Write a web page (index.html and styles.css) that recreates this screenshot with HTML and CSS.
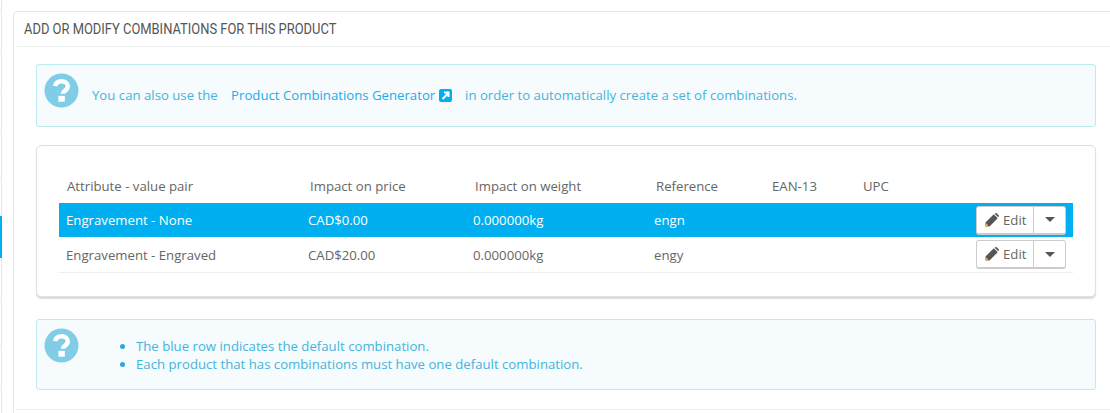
FILE: index.html
```html
<!DOCTYPE html>
<html>

<head>
    <meta charset="UTF-8">
    <title>Product Combinations</title>
    <link rel="stylesheet" href="styles.css">
</head>

<body>
    <div class="sidebar">
        <div class="sidebar-active"></div>
    </div>

    <div class="panel">
        <h3 class="panel-heading"><span class="panel-title">Add or modify combinations for this product</span></h3>

        <div class="alert alert-single">
            <svg class="alert-icon" viewBox="0 0 36 36">
                <circle cx="18" cy="18" r="17.5" fill="#81cde8" />
                <path d="M11.5 13.5c.6-3.2 3.2-5 6.6-5 3.700 0 6.400 2.200 6.400 5.200 0 4.300-5 4.400-5 7.600" fill="none" stroke="#fff" stroke-width="4.600" />
                <rect x="14.800" y="23.500" width="6.600" height="6" fill="#fff" />
            </svg>
            <p class="alert-text">
                You can also use the
                <a class="alert-link" href="#">Product Combinations Generator
                    <svg class="external-icon" viewBox="0 0 13 13">
                        <rect width="13" height="13" rx="2" fill="#00aff0" />
                        <path d="M3.500 10l5-5M5 3.500h4.500V8" fill="none" stroke="#fff" stroke-width="2" />
                    </svg>
                </a>
                in order to automatically create a set of combinations.
            </p>
        </div>

        <div class="table-card">
            <table class="combo-table">
                <colgroup>
                    <col class="col-attr">
                    <col class="col-price">
                    <col class="col-weight">
                    <col class="col-ref">
                    <col class="col-ean">
                    <col class="col-upc">
                    <col>
                </colgroup>
                <thead>
                    <tr>
                        <th>Attribute - value pair</th>
                        <th>Impact on price</th>
                        <th>Impact on weight</th>
                        <th>Reference</th>
                        <th>EAN-13</th>
                        <th>UPC</th>
                        <th></th>
                    </tr>
                </thead>
                <tbody>
                    <tr class="row-default">
                        <td>Engravement - None</td>
                        <td>CAD$0.00</td>
                        <td>0.000000kg</td>
                        <td>engn</td>
                        <td></td>
                        <td></td>
                        <td class="cell-actions">
                            <div class="btn-group">
                                <a class="btn btn-edit" href="#">
                                    <svg class="pencil-icon" viewBox="0 0 14 14">
                                        <path d="M.5 9.500L8.800 1.300l3.900 3.900L4.500 13.500H.5z" fill="#555" />
                                        <path d="M9.700.8l.9-.6c.4-.2.8-.2 1.100.1l2 2c.3.3.3.700.1 1.100l-.6.900z" fill="#555" />
                                        <path d="M.5 9.800l3.700 3.700H.5z" fill="#e2b15c" />
                                    </svg>
                                    Edit
                                </a>
                                <a class="btn btn-caret" href="#"><span class="caret"></span></a>
                            </div>
                        </td>
                    </tr>
                    <tr class="row-plain">
                        <td>Engravement - Engraved</td>
                        <td>CAD$20.00</td>
                        <td>0.000000kg</td>
                        <td>engy</td>
                        <td></td>
                        <td></td>
                        <td class="cell-actions">
                            <div class="btn-group">
                                <a class="btn btn-edit" href="#">
                                    <svg class="pencil-icon" viewBox="0 0 14 14">
                                        <path d="M.5 9.500L8.800 1.300l3.900 3.900L4.500 13.500H.5z" fill="#555" />
                                        <path d="M9.700.8l.9-.6c.4-.2.8-.2 1.100.1l2 2c.3.3.3.700.1 1.100l-.6.900z" fill="#555" />
                                        <path d="M.5 9.800l3.700 3.700H.5z" fill="#e2b15c" />
                                    </svg>
                                    Edit
                                </a>
                                <a class="btn btn-caret" href="#"><span class="caret"></span></a>
                            </div>
                        </td>
                    </tr>
                </tbody>
            </table>
        </div>

        <div class="alert alert-list">
            <svg class="alert-icon" viewBox="0 0 36 36">
                <circle cx="18" cy="18" r="17.5" fill="#81cde8" />
                <path d="M11.5 13.5c.6-3.2 3.2-5 6.6-5 3.700 0 6.400 2.200 6.400 5.200 0 4.300-5 4.400-5 7.600" fill="none" stroke="#fff" stroke-width="4.600" />
                <rect x="14.800" y="23.500" width="6.600" height="6" fill="#fff" />
            </svg>
            <ul class="alert-items">
                <li>The blue row indicates the default combination.</li>
                <li>Each product that has combinations must have one default combination.</li>
            </ul>
        </div>

        <div class="panel-footer"></div>
    </div>
</body>

</html>
```

FILE: styles.css
```css
* {
    box-sizing: border-box;
}

html,
body {
    height: 413px;
    margin: 0;
    overflow: hidden;
}

body {
    display: flex;
    background-color: #fff;
    color: #666;
    font-family: "Open Sans", sans-serif;
    font-size: 13.2px;
}

/* Left tab column, mostly cut off */
.sidebar {
    flex-shrink: 0;
    width: 2px;
    margin-right: 11px;
    padding-top: 216px;
    border-right: 1px solid #e6e6e6;
    background: repeating-linear-gradient(#fff 0, #fff 8px, #eee 8px, #eee 9px, #fff 9px, #fff 42px);
}

.sidebar-active {
    width: 2px;
    height: 42px;
    background-color: #00aff0;
}

/* Main panel */
.panel {
    flex: 1;
    height: 402px;
    margin-top: 11px;
    padding: 0 14px 0 22px;
    border: 1px solid #e6e6e6;
    border-right: none;
    border-bottom: none;
    border-top-left-radius: 5px;
    background-color: #fff;
}

.panel-heading {
    height: 35px;
    margin: 0 -14px 17px -19px;
    padding: 7px 0 0 7px;
    border-bottom: 1px solid #eee;
    color: #555;
    font-family: "Roboto", sans-serif;
    font-size: 15.5px;
    font-weight: 400;
    line-height: 20px;
    text-transform: uppercase;
    white-space: nowrap;
}

/* no condensed font here, so squeeze the title */
.panel-title {
    display: inline-block;
    transform: scaleX(0.834);
    transform-origin: left center;
}

/* Info boxes */
.alert {
    display: flex;
    position: relative;
    border: 1px solid #bde9ef;
    border-radius: 3px;
    background-color: #f6fbfe;
    color: #45b4dc;
}

.alert-single {
    height: 63px;
    margin-bottom: 18px;
    padding: 21px 0 0 55px;
}

.alert-list {
    height: 71px;
    margin-top: 22px;
    padding: 17px 0 0 99px;
}

.alert-icon {
    position: absolute;
    left: 7px;
    top: 8px;
    width: 35px;
    height: 35px;
}

.alert-text {
    margin: 0;
    line-height: 18px;
}

.alert-link {
    margin: 0 10px;
    color: #1cacea;
    text-decoration: none;
}

.external-icon {
    width: 13px;
    height: 13px;
    vertical-align: -2px;
}

.alert-items {
    margin: 0;
    padding: 0;
    line-height: 18px;
}

.alert-items li::marker {
    color: #2ba9d8;
}

/* Combinations table */
.table-card {
    height: 152px;
    padding: 23px 22px 0;
    border: 1px solid #e0e0e0;
    border-radius: 5px;
    background-color: #fff;
    box-shadow: 0 2px 1px #ddd;
}

.combo-table {
    width: 1014px;
    border-collapse: collapse;
    table-layout: fixed;
}

.col-attr {
    width: 242px;
}

.col-price {
    width: 165px;
}

.col-weight {
    width: 181px;
}

.col-ref {
    width: 117px;
}

.col-ean {
    width: 91px;
}

.col-upc {
    width: 100px;
}

.combo-table th {
    height: 34px;
    padding: 0 8px;
    color: #666;
    font-weight: 400;
    text-align: left;
}

.combo-table th:nth-child(2),
.combo-table th:nth-child(3),
.combo-table th:nth-child(4) {
    padding-left: 9px;
}

.combo-table td {
    padding: 0 7px;
}

.row-default td {
    height: 34px;
    background-color: #00aff0;
    color: #fff;
}

.row-plain td {
    height: 35px;
    padding-top: 1px;
    border-bottom: 1px solid #eee;
}

.cell-actions {
    overflow: visible;
}

/* Edit buttons */
.btn-group {
    display: flex;
    width: 90px;
    height: 29px;
    margin-left: 14px;
}

.btn {
    display: flex;
    align-items: center;
    border: 1px solid #ccc;
    border-bottom: 2px solid #ccc;
    background-color: #fff;
    color: #666;
    text-decoration: none;
}

.btn-edit {
    width: 58px;
    gap: 4px;
    padding-left: 8px;
    border-radius: 3px 0 0 3px;
}

.btn-caret {
    width: 32px;
    justify-content: center;
    border-left: none;
    border-radius: 0 3px 3px 0;
}

.pencil-icon {
    width: 14px;
    height: 14px;
}

.caret {
    border-top: 5px solid #555;
    border-left: 5px solid transparent;
    border-right: 5px solid transparent;
}

.panel-footer {
    margin: 19px -14px 0 -21px;
    border-top: 1px solid #eee;
}
```
